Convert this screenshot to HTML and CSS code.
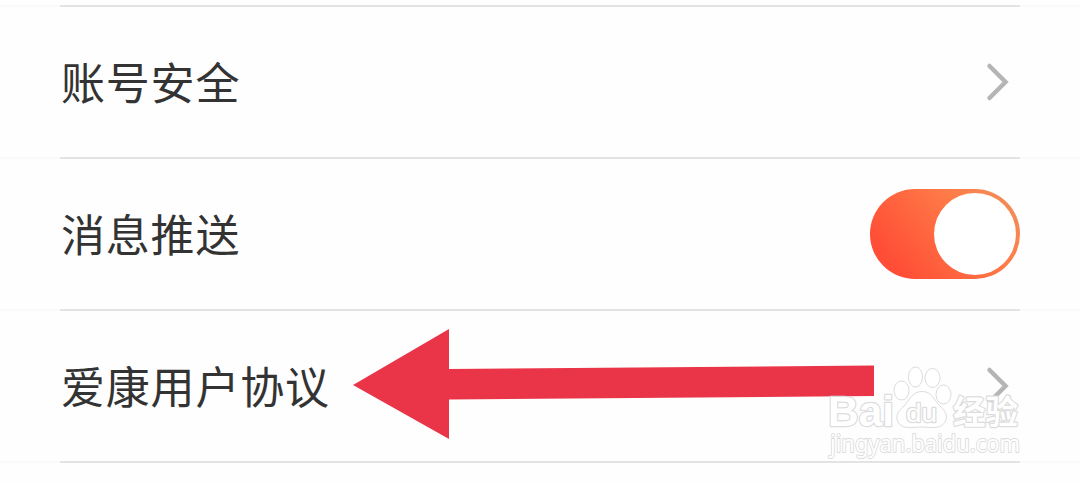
FILE: index.html
```html
<!DOCTYPE html>
<html lang="zh-CN">

<head>
    <meta charset="UTF-8">
    <title>设置</title>
    <link rel="stylesheet" href="styles.css">
</head>

<body>

    <ul class="settings">
        <li class="row">
            <span class="label">账号安全</span>
            <svg class="chevron" viewBox="0 0 24 40">
                <path d="M3.5 4 L19.5 20 L3.5 36" />
            </svg>
        </li>
        <li class="row">
            <span class="label">消息推送</span>
            <span class="toggle"><span class="knob"></span></span>
        </li>
        <li class="row">
            <span class="label">爱康用户协议</span>
            <svg class="chevron" viewBox="0 0 24 40">
                <path d="M3.5 4 L19.5 20 L3.5 36" />
            </svg>
        </li>
    </ul>

    <!-- arrow pointing at the last row -->
    <svg class="arrow" viewBox="0 0 522 112">
        <path d="M0 56 L96 0 V40 L521 36.5 V67 L96 70.5 V110 Z" />
    </svg>

    <svg class="watermark" viewBox="0 0 200 100">
        <g class="outline">
            <text class="brand" x="8" y="66" textLength="66" lengthAdjust="spacingAndGlyphs">Bai</text>
            <ellipse cx="81.5" cy="30.5" rx="7.5" ry="9.5" />
            <ellipse cx="95.5" cy="17" rx="7" ry="10" />
            <ellipse cx="112.5" cy="18" rx="7.5" ry="9.5" />
            <ellipse cx="123.5" cy="34.5" rx="7.5" ry="9.5" />
            <path d="M102 31.5 C92 31.5 90 40 84 46 C78 51 75 56 78 62 C82 70 93 67 102 67 C111 67 120 70 125 62 C129 55 124 50 119 45 C113 39 112 31.5 102 31.5 Z" />
            <text class="du" x="86" y="62" textLength="31" lengthAdjust="spacingAndGlyphs">du</text>
            <text class="jingyan" x="133" y="63.5" textLength="65" lengthAdjust="spacingAndGlyphs">经验</text>
            <text class="site" x="10" y="92" textLength="190" lengthAdjust="spacingAndGlyphs">jingyan.baidu.com</text>
        </g>
    </svg>

</body>

</html>
```

FILE: styles.css
```css
body {
    position: relative;
    height: 482px;
    margin: 0;
    background-color: #fefefe;
    font-family: "Noto Sans CJK SC", sans-serif;
    overflow: hidden;
}

.settings {
    margin: 0;
    padding: 5px 0 0;
    list-style: none;
}

/* the divider is strong under the content and faint in the side margins */
.row {
    display: flex;
    align-items: center;
    justify-content: space-between;
    box-sizing: border-box;
    height: 152px;
    padding: 2px 60px 0;
    background: linear-gradient(90deg, #fafafa 60px, #e3e3e3 60px, #e3e3e3 1020px, #fafafa 1020px) top / 100% 2px no-repeat;
}

.settings::after {
    content: "";
    display: block;
    height: 2px;
    background: linear-gradient(90deg, #fafafa 60px, #e3e3e3 60px, #e3e3e3 1020px, #fafafa 1020px);
}

.label {
    padding: 0 0 2px 1px;
    font-size: 44px;
    line-height: 66px;
    letter-spacing: .8px;
    color: #333;
}

.chevron {
    width: 24px;
    height: 40px;
    margin-right: 10px;
    fill: none;
    stroke: #b5b5b5;
    stroke-width: 4.5;
    stroke-linecap: round;
}

.toggle {
    display: flex;
    align-items: center;
    justify-content: flex-end;
    box-sizing: border-box;
    width: 150px;
    height: 90px;
    padding-right: 4px;
    border-radius: 45px;
    background: linear-gradient(50deg, #ff4d36 15%, #ff7a47 65%, #ed925c 100%);
}

.knob {
    width: 82px;
    height: 82px;
    border-radius: 50%;
    background-color: #fff;
}

.arrow {
    position: absolute;
    left: 353px;
    top: 329px;
    width: 522px;
    height: 112px;
    fill: #ea3548;
}

.watermark {
    position: absolute;
    left: 820px;
    top: 360px;
    width: 200px;
    height: 100px;
    overflow: visible;
}

.outline {
    fill: #fff;
    stroke: #dcdcdc;
    stroke-width: 1;
    stroke-linejoin: round;
}

.outline text {
    paint-order: stroke;
    stroke-width: 2.4;
}

.outline .brand {
    font: bold 43px "Liberation Sans", sans-serif;
}

.outline .du {
    font: 26px "Liberation Sans", sans-serif;
}

.outline .jingyan {
    font: bold 33px "Noto Sans CJK SC", sans-serif;
}

.outline .site {
    font: 23px "Noto Sans", sans-serif;
    stroke-width: 1.8;
}
```
